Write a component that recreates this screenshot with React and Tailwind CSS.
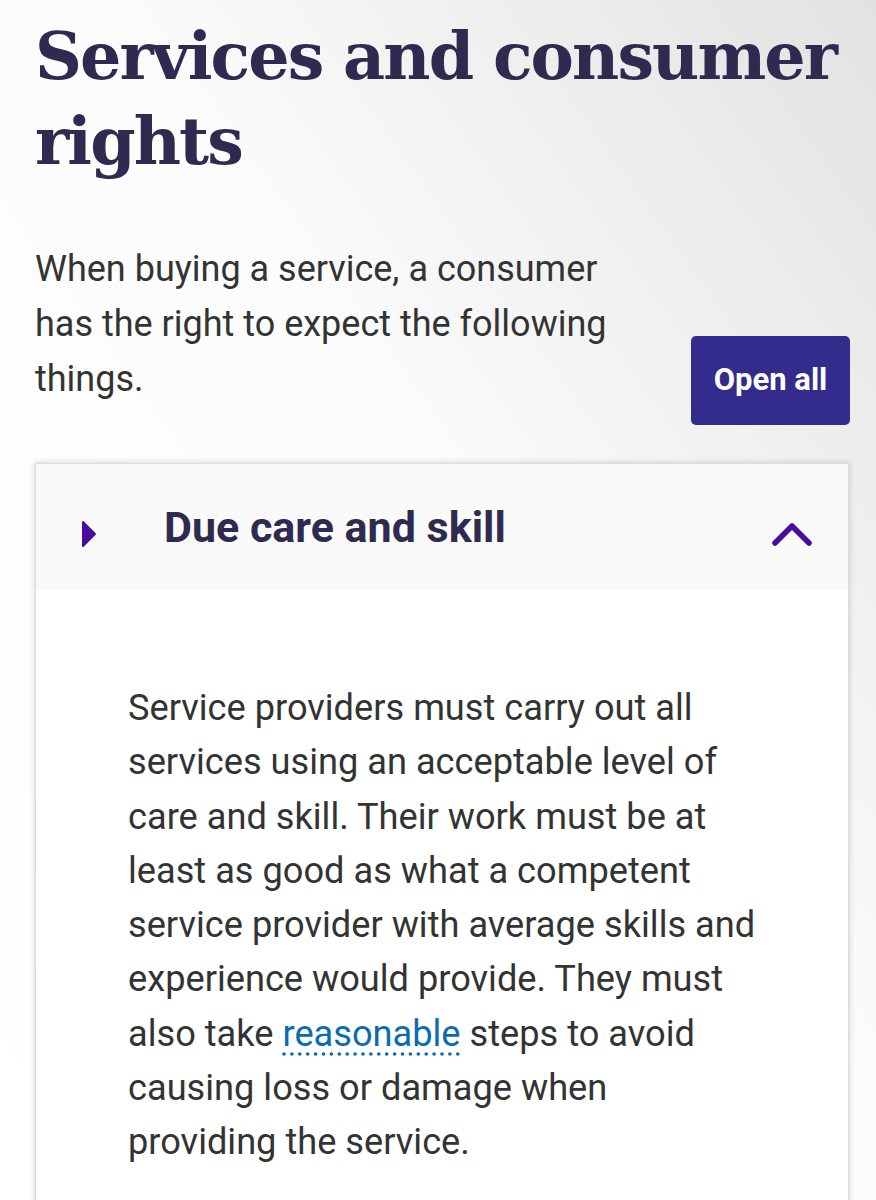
import { useState } from 'react';

const App = () => {
  const [open, setOpen] = useState(true);

  return (
    <div className="min-h-screen w-[876px] overflow-hidden bg-linear-to-bl from-[#e2e2e2] via-[#fcfcfc] via-45% to-white pl-[35px] pr-[26px] pt-[14px]">
      <h1 className="font-['DejaVu_Serif',serif] text-[65px] font-bold leading-[85px] tracking-[-1.9px] text-[#2f2b50]">
        Services and consumer rights
      </h1>

      <div className="mt-[58px] flex items-start justify-between">
        <p className="w-[620px] font-['Roboto',sans-serif] text-[36px] leading-[55px] text-[#333333]">
          When buying a service, a consumer has the right to expect the following things.
        </p>
        <button className="mt-[94px] h-[89px] w-[159px] rounded-[5px] bg-[#332c8c] font-['Roboto',sans-serif] text-[31px] font-bold text-white">
          Open all
        </button>
      </div>

      <div className="mt-[38px] mr-[1px] border border-[#dddddd] bg-white shadow-[0_0_6px_rgba(0,0,0,0.18)]">
        <button
          onClick={() => setOpen(!open)}
          className="flex h-[126px] w-full items-center bg-[#fafafa] pl-[45px] pr-[34px] text-left"
        >
          <svg width="16" height="28" viewBox="0 0 16 28" className="mt-[14px]">
            <path d="M2 2 L14 14 L2 26 Z" fill="#4a0c9c" stroke="#4a0c9c" strokeWidth="2" strokeLinejoin="round" />
          </svg>
          <span className="ml-[67px] flex-1 font-['Roboto',sans-serif] text-[43px] font-bold text-[#2f2b50]">
            Due care and skill
          </span>
          <svg width="44" height="28" viewBox="0 0 44 28" className="mt-[14px]">
            <path d="M5 23 L22 6 L39 23" fill="none" stroke="#4a0c9c" strokeWidth="5.5" strokeLinecap="round" strokeLinejoin="round" />
          </svg>
        </button>

        {open && (
          <div className="pl-[92px] pr-[90px] pt-[91px] pb-[60px]">
            <p className="font-['Roboto',sans-serif] text-[36.2px] leading-[54.3px] text-[#333333]">
              Service providers must carry out all services using an acceptable level of care and skill. Their work must be at least as good as what a competent service provider with average skills and experience would provide. They must also take{' '}
              <a href="#" className="text-[#0b6bb0] underline decoration-dotted decoration-[#0b6bb0] underline-offset-[7px]">
                reasonable
              </a>{' '}
              steps to avoid causing loss or damage when providing the service.
            </p>
          </div>
        )}
      </div>
    </div>
  );
};

export default App;
